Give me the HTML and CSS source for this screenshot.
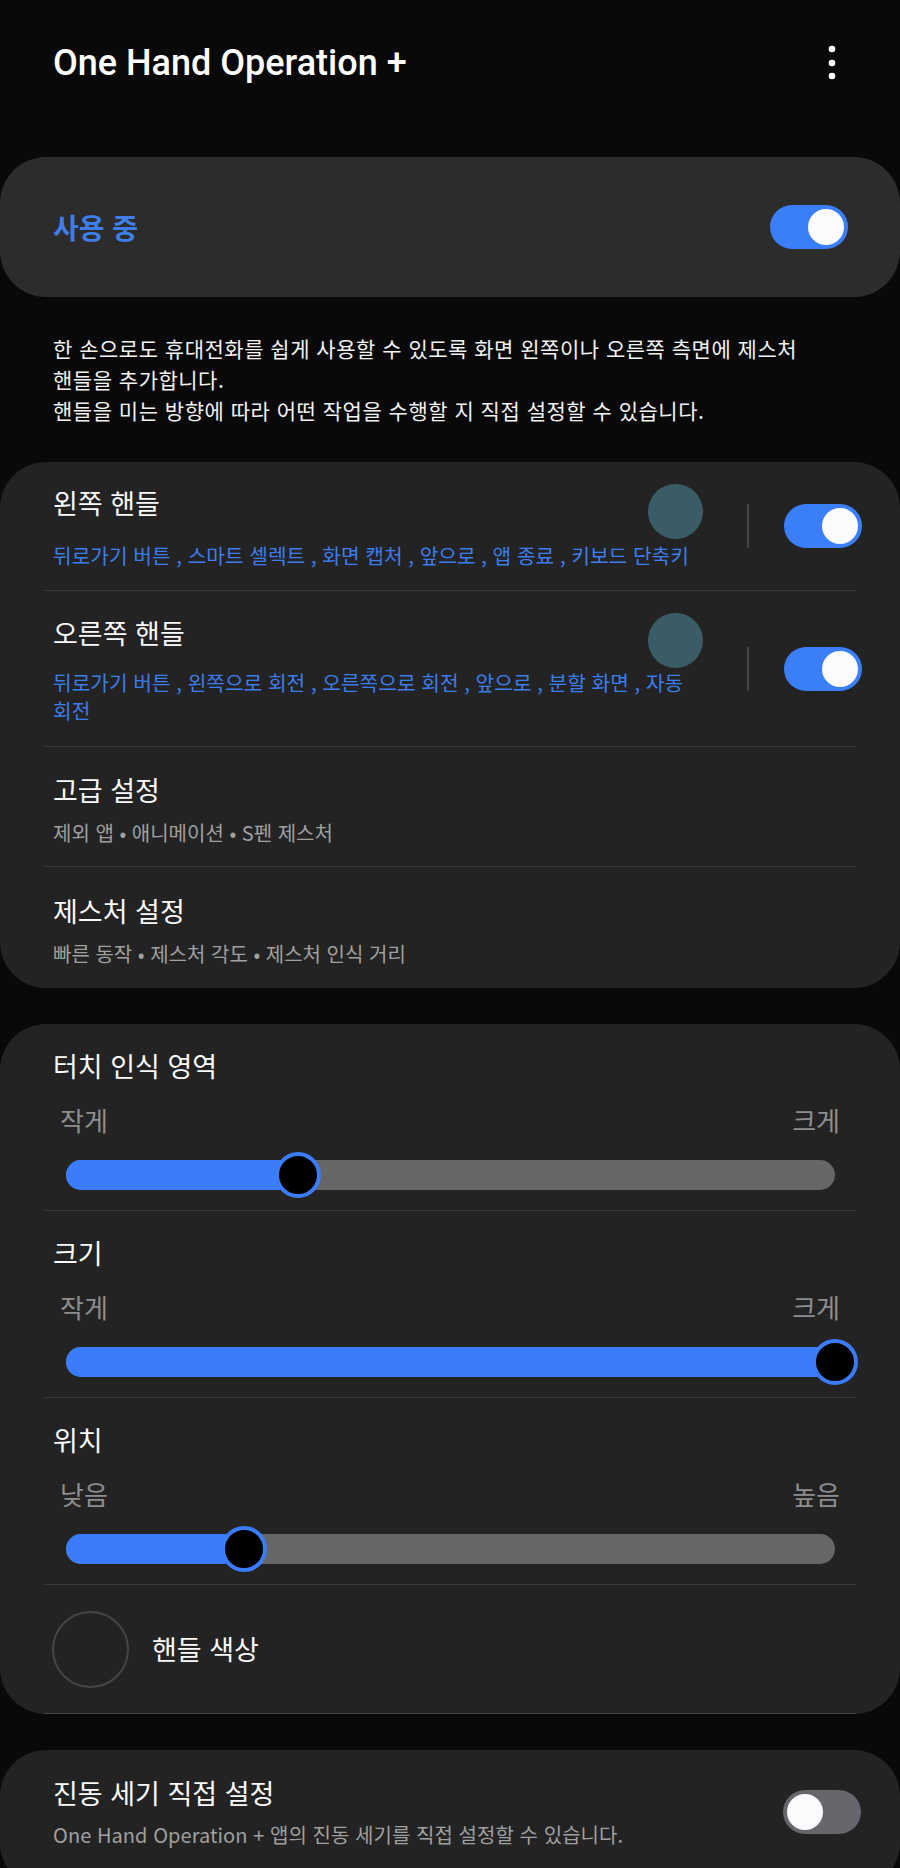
FILE: index.html
```html
<!DOCTYPE html>
<html lang="ko">
<head>
<meta charset="utf-8">
<title>One Hand Operation +</title>
<link rel="stylesheet" href="styles.css">
</head>
<body>
<header class="appbar">
  <h1 class="app-title">One Hand Operation +</h1>
  <span class="kebab" aria-label="더보기">
    <svg width="8" height="36" viewBox="0 0 8 36"><circle cx="4" cy="4" r="3.3" fill="#fff"/><circle cx="4" cy="18" r="3.3" fill="#fff"/><circle cx="4" cy="31" r="3.3" fill="#fff"/></svg>
  </span>
</header>

<section class="card master">
  <span class="master-label">사용 중</span>
  <span class="switch on"><span class="knob"></span></span>
</section>

<p class="intro">한 손으로도 휴대전화를 쉽게 사용할 수 있도록 화면 왼쪽이나 오른쪽 측면에 제스처<br>핸들을 추가합니다.<br>핸들을 미는 방향에 따라 어떤 작업을 수행할 지 직접 설정할 수 있습니다.</p>

<section class="card list">
  <div class="row handle-row r1">
    <div class="row-text">
      <div class="row-title">왼쪽 핸들</div>
      <div class="row-sub blue">뒤로가기 버튼 , 스마트 셀렉트 , 화면 캡처 , 앞으로 , 앱 종료 , 키보드 단축키</div>
    </div>
    <span class="swatch"></span>
    <span class="vdiv"></span>
    <span class="switch on"><span class="knob"></span></span>
  </div>
  <div class="row handle-row r2">
    <div class="row-text">
      <div class="row-title">오른쪽 핸들</div>
      <div class="row-sub blue">뒤로가기 버튼 , 왼쪽으로 회전 , 오른쪽으로 회전 , 앞으로 , 분할 화면 , 자동<br>회전</div>
    </div>
    <span class="swatch"></span>
    <span class="vdiv"></span>
    <span class="switch on"><span class="knob"></span></span>
  </div>
  <div class="row plain-row r3">
    <div class="row-text">
      <div class="row-title">고급 설정</div>
      <div class="row-sub grey">제외 앱 • 애니메이션 • S펜 제스처</div>
    </div>
  </div>
  <div class="row plain-row r4 last">
    <div class="row-text">
      <div class="row-title">제스처 설정</div>
      <div class="row-sub grey">빠른 동작 • 제스처 각도 • 제스처 인식 거리</div>
    </div>
  </div>
</section>

<section class="card sliders">
  <div class="slider-row">
    <div class="row-title">터치 인식 영역</div>
    <div class="range-labels"><span>작게</span><span>크게</span></div>
    <div class="slider"><div class="track"><div class="fill" style="width:30.2%"></div><span class="thumb" style="left:30.2%"></span></div></div>
  </div>
  <div class="slider-row">
    <div class="row-title">크기</div>
    <div class="range-labels"><span>작게</span><span>크게</span></div>
    <div class="slider"><div class="track"><div class="fill" style="width:100%"></div><span class="thumb" style="left:100%"></span></div></div>
  </div>
  <div class="slider-row">
    <div class="row-title">위치</div>
    <div class="range-labels"><span>낮음</span><span>높음</span></div>
    <div class="slider"><div class="track"><div class="fill" style="width:23.2%"></div><span class="thumb" style="left:23.2%"></span></div></div>
  </div>
  <div class="color-row">
    <span class="color-ring"></span>
    <span class="color-label">핸들 색상</span>
  </div>
</section>

<section class="card vib">
  <div class="row-text">
    <div class="row-title">진동 세기 직접 설정</div>
    <div class="row-sub grey">One Hand Operation + 앱의 진동 세기를 직접 설정할 수 있습니다.</div>
  </div>
  <span class="switch off"><span class="knob"></span></span>
</section>
</body>
</html>
```

FILE: styles.css
```css
* { box-sizing: border-box; }

html, body {
  margin: 0;
  padding: 0;
  background: #090909;
  color: #fafafa;
  font-family: "Noto Sans CJK KR", "Noto Sans", sans-serif;
}

body { overflow: hidden; }

.appbar {
  display: flex;
  align-items: center;
  justify-content: space-between;
  padding: 41px 56px 0 53px;
  height: 85px;
}

.app-title {
  margin: 0;
  font-family: "Roboto", "Liberation Sans", sans-serif;
  font-weight: 500;
  font-size: 36px;
  line-height: 44px;
  letter-spacing: 0;
  color: #ffffff;
}

.kebab {
  display: flex;
  width: 24px;
  height: 44px;
  align-items: center;
  justify-content: center;
}

.card {
  background: #232323;
  border-radius: 46px;
}

.master {
  margin-top: 72px;
  height: 140px;
  background: #2c2c2c;
  display: flex;
  align-items: center;
  justify-content: space-between;
  padding: 0 52px 0 53px;
}

.master-label {
  color: #3f7ee9;
  font-size: 28px;
  font-weight: 700;
  line-height: 34px;
}

.switch {
  display: flex;
  align-items: center;
  width: 78px;
  height: 44px;
  border-radius: 22px;
  padding: 4px;
  flex: none;
}

.switch.on {
  background: #3a7ef8;
  justify-content: flex-end;
}

.switch.off {
  background: #67666c;
  justify-content: flex-start;
}

.knob {
  width: 36px;
  height: 36px;
  border-radius: 50%;
  background: #fbfbfd;
}

.intro {
  margin: 36px 0 36px 0;
  padding: 0 20px 0 53px;
  font-size: 21px;
  line-height: 31px;
  letter-spacing: 0.5px;
  color: #f2f2f2;
}

.list {
  padding: 0 44px;
  margin-bottom: 36px;
}

.row {
  position: relative;
  display: flex;
  align-items: center;
  padding-left: 9px;
  border-bottom: 1px solid #393939;
}

.row.last { border-bottom: none; }

.row-text {
  flex: 1;
  min-width: 0;
}

.row-title {
  font-size: 27px;
  line-height: 36px;
  color: #fafafa;
}

.row-sub {
  font-size: 20px;
  line-height: 28px;
}

.row-sub.blue { color: #3d7deb; font-size: 20.3px; }
.row-sub.grey { color: #a0a0a0; }

.handle-row .row-sub { white-space: nowrap; }
.r1 .row-text { padding: 23px 0 21px; }
.r1 .row-sub { margin-top: 20px; }
.r2 .row-text { padding: 24px 0 22px; }
.r2 .row-sub { margin-top: 17px; }

.r3 .row-text { padding: 25px 0 19px; }
.r4 .row-text { padding: 26px 0 20px; }
.plain-row .row-sub { margin-top: 11px; }

.swatch {
  position: absolute;
  top: 22px;
  right: 153px;
  width: 55px;
  height: 55px;
  border-radius: 50%;
  background: #3a5c66;
}

.vdiv {
  width: 2px;
  height: 44px;
  background: #444444;
  margin: 0 35px 0 24px;
  flex: none;
}

.handle-row .switch { margin-right: -6px; }

.sliders {
  padding: 0 44px;
  margin-bottom: 36px;
}

.slider-row {
  padding: 24px 0 11px;
  border-bottom: 1px solid #393939;
}

.slider-row .row-title { padding-left: 9px; }

.range-labels {
  display: flex;
  justify-content: space-between;
  margin-top: 21px;
  padding: 0 16px;
  font-size: 26px;
  line-height: 30px;
  color: #8d8d8d;
}

.slider {
  margin: 16px 21px 0 22px;
  height: 48px;
  display: flex;
  align-items: center;
}

.track {
  position: relative;
  width: 100%;
  height: 30px;
  border-radius: 15px;
  background: #666666;
}

.fill {
  height: 100%;
  border-radius: 15px;
  background: #3a7cfb;
}

.thumb {
  position: absolute;
  top: 50%;
  width: 46px;
  height: 46px;
  border-radius: 50%;
  background: #000;
  border: 4px solid #3a7cfb;
  transform: translate(-50%, -50%);
}

.color-row {
  display: flex;
  align-items: center;
  height: 129px;
  padding-left: 8px;
  border-bottom: 1px solid #474747;
}

.color-ring {
  width: 77px;
  height: 77px;
  border-radius: 50%;
  border: 2px solid #464646;
  flex: none;
}

.color-label {
  margin-left: 23px;
  font-size: 27px;
  line-height: 34px;
}

.vib {
  display: flex;
  align-items: center;
  padding: 25px 39px 40px 53px;
}

.vib .row-sub { margin-top: 10px; letter-spacing: 0.05px; }
```
